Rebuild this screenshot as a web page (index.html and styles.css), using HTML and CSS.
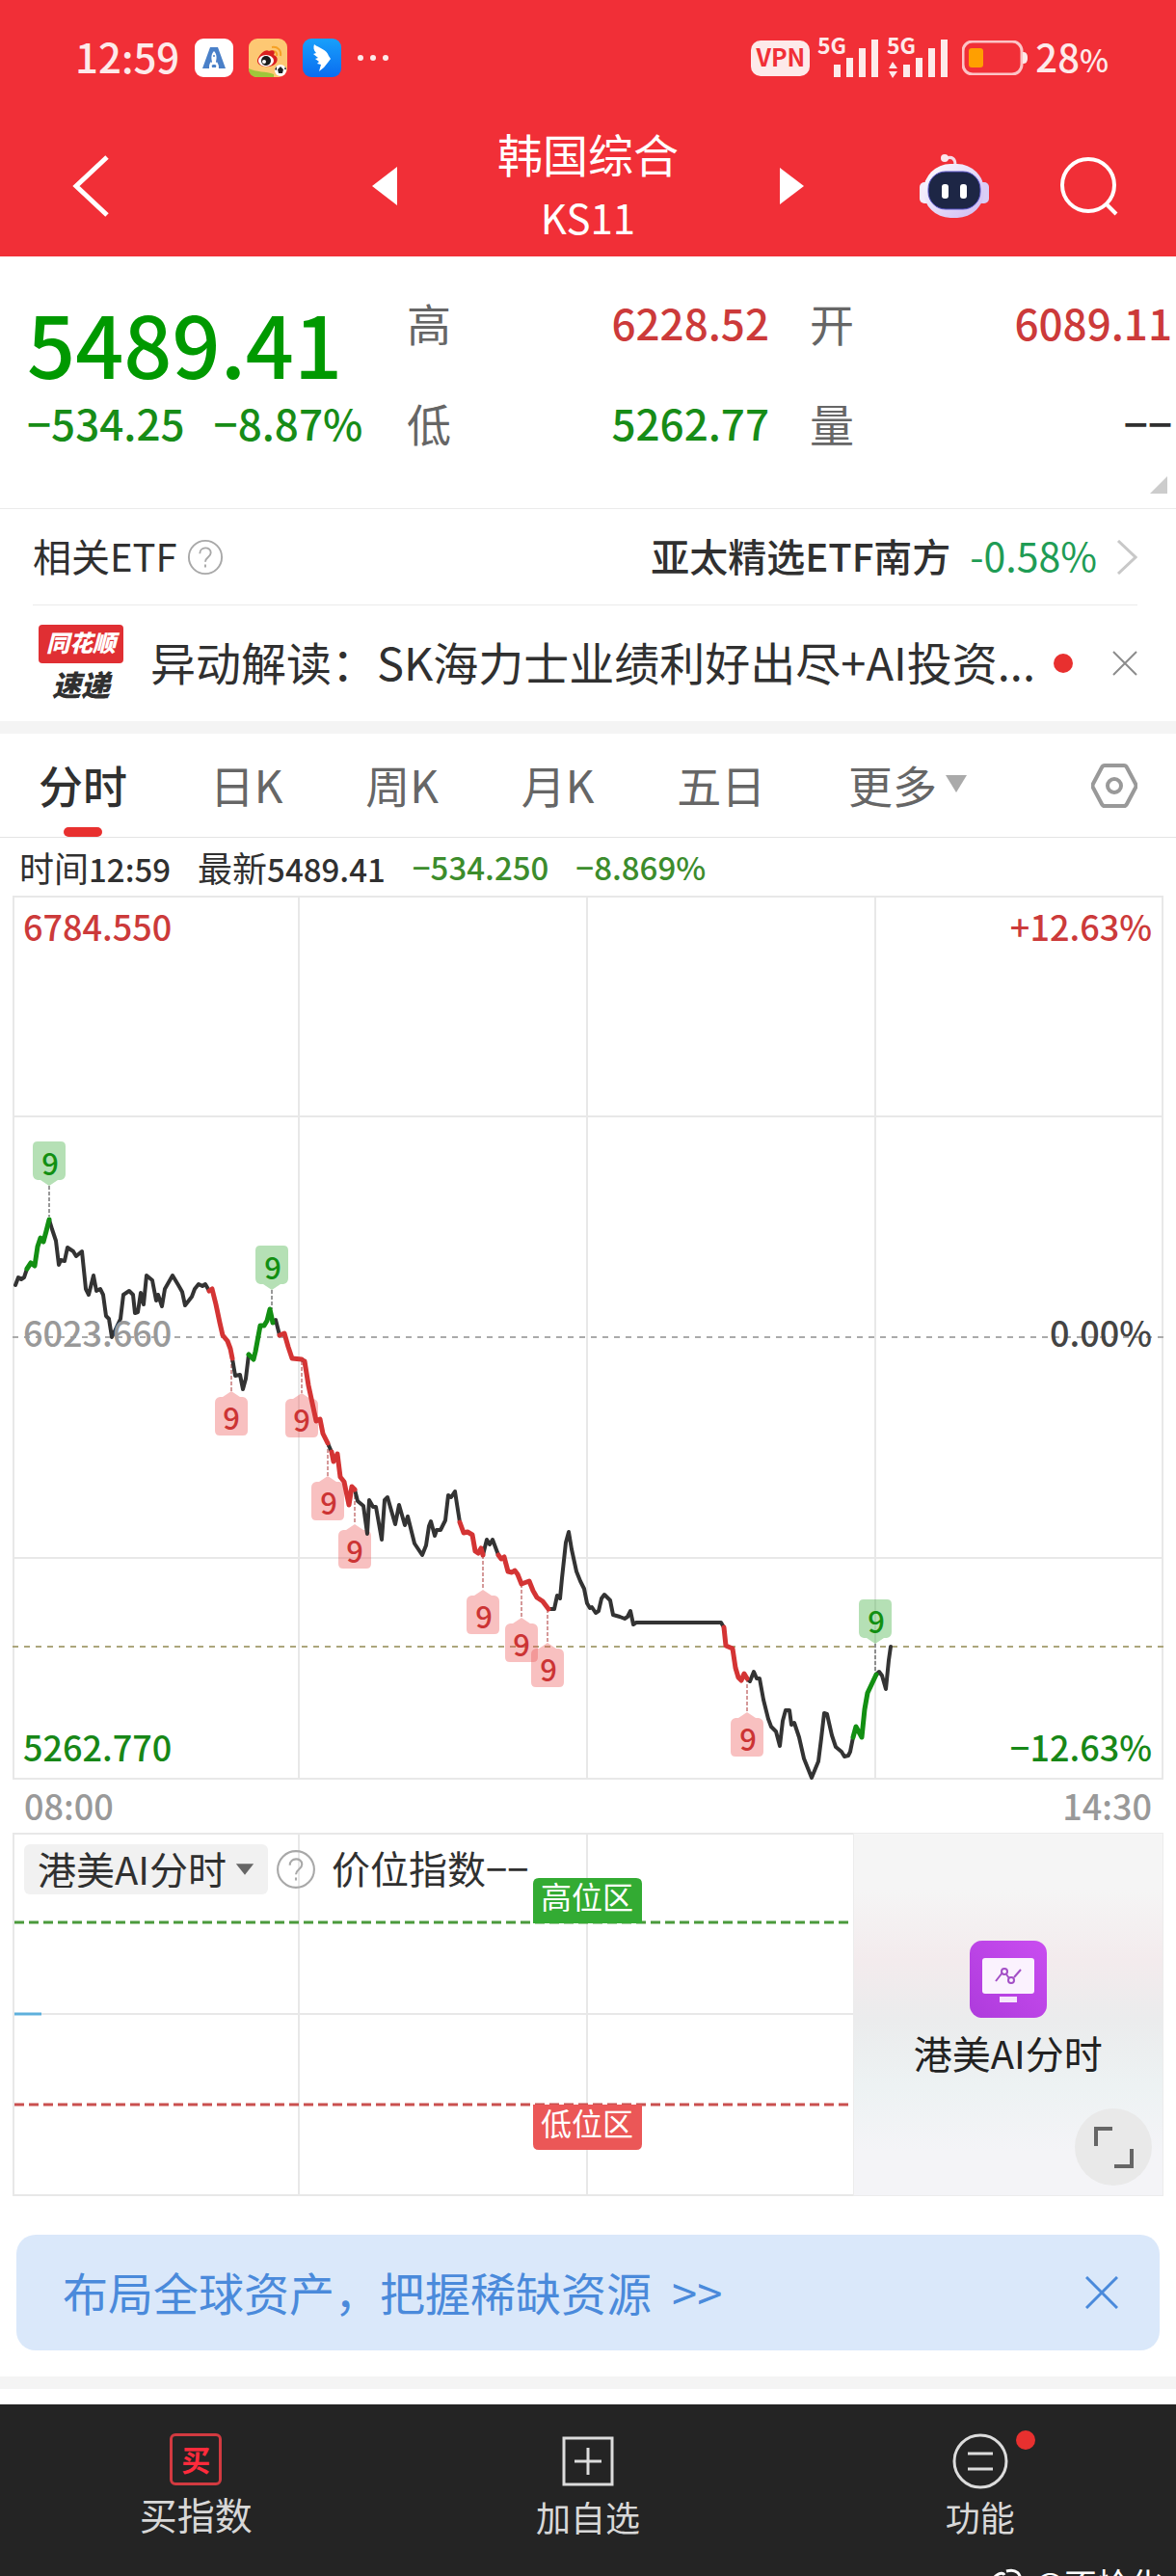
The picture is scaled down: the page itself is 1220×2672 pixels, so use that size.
FILE: index.html
```html
<!DOCTYPE html>
<html lang="zh-CN">
<head>
    <meta charset="UTF-8">
    <meta name="viewport" content="width=device-width, initial-scale=1.0">
    <title>韩国综合 KS11</title>
    <link rel="stylesheet" href="styles.css">
</head>
<body>
    <header class="header">
        <div class="status-bar">
            <span class="clock">12:59</span>
            <svg class="app-icon" viewBox="0 0 40 40">
                <rect width="40" height="40" rx="9" fill="#fff"/>
                <path d="M16 9h8l8 22h-7c0-4-1-5-2-7l-1 6h-4l-1-6c-2 2-2 4-2 7H8z" fill="#4a80c8"/>
                <path d="M20 13c-3 3-3 7-2 11l-3 5 4-2h2l4 2-3-5c1-4 1-8-2-11z" fill="#fff"/>
                <circle cx="20" cy="18" r="1" fill="#4a80c8"/>
            </svg>
            <svg class="app-icon" viewBox="0 0 40 40">
                <rect width="40" height="40" rx="9" fill="#fdc873"/>
                <path d="M0 31c8 4 18 3 26 6v3H9c-5 0-9-3-9-9z" fill="#9fc63a"/>
                <path d="M24 9c6-1 10 3 9 9M25 13c3 0 5 2 4 5" fill="none" stroke="#f5a024" stroke-width="2"/>
                <path d="M9 22c2-6 9-12 12-9 5-2 7 1 5 4 6 2 4 9-1 11-8 3-17 0-16-6z" fill="#d9201f"/>
                <ellipse cx="18" cy="23" rx="8" ry="6" fill="#fff"/>
                <circle cx="18" cy="23" r="5" fill="#1b1b1b"/>
                <circle cx="16" cy="24" r="2" fill="#fff"/>
                <circle cx="33" cy="33" r="6" fill="#fff"/>
                <path d="M33 29l3 3-1 4h-4l-1-4zM27 32l2-3v4zM39 32l-1-3-1 3z" fill="#222"/>
            </svg>
            <svg class="app-icon" viewBox="0 0 40 40">
                <defs>
                    <linearGradient id="wingBg" x1="0" y1="0" x2="0" y2="1">
                        <stop offset="0" stop-color="#18a0fb"/>
                        <stop offset="1" stop-color="#0a6cf0"/>
                    </linearGradient>
                </defs>
                <rect width="40" height="40" rx="9" fill="url(#wingBg)"/>
                <path d="M12 6c5 4 13 5 15 12l2 3-3 4-4 5-5 4 2-7-4-1 2-2-4-3 3-1-5-4 3-1c-3-3-3-6-2-9z" fill="#fff"/>
            </svg>
            <svg class="dots-icon" viewBox="0 0 34 8">
                <circle cx="4" cy="4" r="3"/><circle cx="17" cy="4" r="3"/><circle cx="30" cy="4" r="3"/>
            </svg>
            <div class="status-right">
                <span class="vpn">VPN</span>
                <svg class="signal" viewBox="0 0 64 44">
                    <text x="0" y="18">5G</text>
                    <path d="M17 29h7v13h-7zM30 22h7v20h-7zM43 12h7v30h-7zM56 3h7v39h-7z"/>
                </svg>
                <svg class="signal" viewBox="0 0 64 44">
                    <text x="0" y="18">5G</text>
                    <path d="M2 33l4-7 5 7zM2 36h9l-5 7z"/>
                    <path d="M17 29h7v13h-7zM30 22h7v20h-7zM43 12h7v30h-7zM56 3h7v39h-7z"/>
                </svg>
                <svg class="battery" viewBox="0 0 68 36">
                    <rect x="1" y="1" width="61" height="34" rx="10" fill="none" stroke="#fcc4c6" stroke-width="3"/>
                    <rect x="7" y="8" width="15" height="20" rx="3" fill="#ff9f00"/>
                    <path d="M63 12c3 0 5 1 5 6s-2 6-5 6z" fill="#fdeaea"/>
                </svg>
                <span class="battery-text">28<small>%</small></span>
            </div>
        </div>
        <nav class="title-bar">
            <button class="icon-btn back" aria-label="返回">
                <svg class="back-icon" viewBox="0 0 40 66"><path d="M36 3L4 33l32 30" fill="none" stroke="#fff" stroke-width="5"/></svg>
            </button>
            <div class="title-group">
                <button class="icon-btn" aria-label="上一个">
                    <svg class="arrow-icon" viewBox="0 0 26 40"><path d="M26 0v40L0 20z"/></svg>
                </button>
                <h1 class="title">韩国综合<span class="code">KS11</span></h1>
                <button class="icon-btn" aria-label="下一个">
                    <svg class="arrow-icon" viewBox="0 0 26 40"><path d="M1 1v38l25-19z"/></svg>
                </button>
            </div>
            <div class="title-actions">
                <button class="icon-btn" aria-label="智能助手">
                    <svg class="robot-icon" viewBox="0 0 72 68">
                        <defs>
                            <linearGradient id="robotHead" x1="0" y1="0" x2="1" y2="1">
                                <stop offset="0" stop-color="#fff"/>
                                <stop offset="1" stop-color="#cdb9f2"/>
                            </linearGradient>
                        </defs>
                        <path d="M28 5c6-2 9 1 9 7" fill="none" stroke="#f6dbe6" stroke-width="3"/>
                        <circle cx="26" cy="5" r="4" fill="#fbe6ec"/>
                        <rect x="0" y="30" width="12" height="22" rx="5" fill="#f3ecfb"/>
                        <rect x="60" y="30" width="12" height="22" rx="5" fill="#d9cdf6"/>
                        <rect x="4" y="11" width="63" height="56" rx="28" fill="url(#robotHead)"/>
                        <rect x="9" y="19" width="54" height="39" rx="18" fill="#1d2645" stroke="#5a55c8" stroke-width="1"/>
                        <rect x="23" y="32" width="7" height="15" rx="3" fill="#fff"/>
                        <rect x="42" y="32" width="7" height="15" rx="3" fill="#fff"/>
                    </svg>
                </button>
                <button class="icon-btn" aria-label="搜索">
                    <svg class="search-icon" viewBox="0 0 60 62">
                        <circle cx="29" cy="30" r="27" fill="none" stroke="#fff" stroke-width="4"/>
                        <path d="M47 49l11 11" stroke="#fff" stroke-width="4"/>
                    </svg>
                </button>
            </div>
        </nav>
    </header>

    <main>
        <section class="quote">
            <div class="quote-main">
                <div class="price">5489.41</div>
                <div class="change"><span>−534.25</span><span>−8.87%</span></div>
            </div>
            <dl class="stats">
                <div class="stat"><dt>高</dt><dd class="up">6228.52</dd></div>
                <div class="stat"><dt>开</dt><dd class="up">6089.11</dd></div>
                <div class="stat"><dt>低</dt><dd class="down">5262.77</dd></div>
                <div class="stat"><dt>量</dt><dd>−−</dd></div>
            </dl>
            <span class="corner"></span>
        </section>

        <section class="etf-row">
            <span>相关ETF</span>
            <svg class="help-icon" viewBox="0 0 40 40">
                <circle cx="20" cy="20" r="18"/>
                <path d="M14 16c0-8 12-8 12-1 0 5-6 5-6 10M20 28v3"/>
            </svg>
            <a class="etf-link" href="#">
                <span class="etf-name">亚太精选ETF南方</span>
                <span class="etf-change">-0.58%</span>
                <svg class="chevron-icon" viewBox="0 0 22 36"><path d="M2 1l18 17L2 35" fill="none" stroke="#c8c8c8" stroke-width="3"/></svg>
            </a>
        </section>

        <section class="news-row">
            <div class="news-badge">
                <span class="badge-top">同花顺</span>
                <span class="badge-bottom">速递</span>
            </div>
            <a class="news-title" href="#">异动解读：SK海力士业绩利好出尽+AI投资...</a>
            <span class="dot"></span>
            <button class="icon-btn news-close" aria-label="关闭">
                <svg class="close-small" viewBox="0 0 26 26"><path d="M1 1l24 24M25 1L1 25" fill="none" stroke="#8c8c8c" stroke-width="2"/></svg>
            </button>
        </section>

        <div class="divider"></div>

        <nav class="tabs">
            <div class="tab-list">
                <button class="tab active">分时</button>
                <button class="tab">日K</button>
                <button class="tab">周K</button>
                <button class="tab">月K</button>
                <button class="tab">五日</button>
                <button class="tab">更多<svg class="caret" viewBox="0 0 24 20"><path d="M1 1h22L12 19z"/></svg></button>
            </div>
            <button class="icon-btn" aria-label="设置">
                <svg class="setting-icon" viewBox="0 0 48 46">
                    <path d="M14 2h20q2 0 3 2l9 17q1 2 0 4l-9 17q-1 2-3 2H14q-2 0-3-2L2 25q-1-2 0-4l9-17q1-2 3-2z"/>
                    <circle cx="24" cy="23" r="7"/>
                </svg>
            </button>
        </nav>

        <div class="chart-info">
            <span>时间<b>12:59</b></span>
            <span>最新<b>5489.41</b></span>
            <b class="info-down">−534.250</b>
            <b class="info-down">−8.869%</b>
        </div>

        <!-- 分时走势 -->
        <svg class="chart" viewBox="0 0 1194 917">
            <defs>
                <path id="tagDown" d="M-12-46h24q5 0 5 5v29q0 5-5 6h-3L0 0l-9-6h-3q-5-1-5-6v-29q0-5 5-5z"/>
                <path id="tagUp" d="M-12 46h24q5 0 5-5V12q0-5-5-6H9L0 0l-9 6h-3q-5 1-5 6v29q0 5 5 5z"/>
            </defs>
            <path class="grid" d="M1 1h1192v915H1zM297 1v915M596 1v915M895 1v915M1 229h1192M1 687h1192"/>
            <path class="base-line" d="M0 458h1194"/>
            <path class="now-line" d="M0 779h1194"/>

            <g class="stems">
                <path d="M38 301v32M269 409v20M895 776v32" stroke="#333"/>
                <path d="M227 480v34M300 483v33M327 568v34M355 616v36M488 684v36M528 714v35M555 740v35M762 812v35" stroke="#a33"/>
            </g>
            <g class="tag-green">
                <use href="#tagDown" x="38" y="301"/>
                <use href="#tagDown" x="269" y="409"/>
                <use href="#tagDown" x="895" y="776"/>
            </g>
            <g class="tag-red">
                <use href="#tagUp" x="227" y="514"/>
                <use href="#tagUp" x="300" y="516"/>
                <use href="#tagUp" x="327" y="602"/>
                <use href="#tagUp" x="355" y="652"/>
                <use href="#tagUp" x="488" y="720"/>
                <use href="#tagUp" x="528" y="749"/>
                <use href="#tagUp" x="555" y="775"/>
                <use href="#tagUp" x="762" y="847"/>
            </g>

            <g class="line">
                <path d="M3 404L6 396 9 398 12 396 15 387M38 336L41 346 45 358 48 383 50 378 54 379 57 365 63 369 66 374 72 369 75 398 76 408 79 414 84 394 87 410 91 408 94 414 97 436 100 439 103 458 112 439 115 414 121 410 125 414 127 433 130 432 133 412 136 424 139 394 145 399 149 420 151 414 155 426 158 408 166 394 172 404 176 411 179 425 186 416 189 408 193 403 197 405 200 403 204 410"/>
                <path d="M228 480L231 498 236 497 239 512 242 501 245 476M270 443L273 440 277 456M300 481L303 483M327 568L331 577M355 616L358 628 364 633 368 662 370 627 374 634 377 634 383 668 386 627 389 624 397 652 401 632 407 653 410 644 417 672 425 684 429 674 432 654 434 649 438 664 440 658 444 658 449 648 452 622 455 624 459 618 461 631 464 650"/>
                <path d="M488 684L492 668 495 673 498 668 504 684M556 740L562 740 565 726 568 729 570 708 574 671 577 660 580 678 585 701 589 711 593 719 596 734 599 739 601 738 605 744 608 742 611 729 614 725 620 731 623 746 630 748 635 750 638 748 641 742 644 756 647 754 735 754 738 759"/>
                <path d="M762 812L765 815 769 805 772 812 775 812 779 834 784 854 787 862 792 867 796 882 799 856 802 845 806 845 808 860 811 858 816 873 821 895 829 915 836 898 839 874 842 848 845 849 850 871 854 883 860 888 863 893 867 892 869 888 872 873M896 808L899 805 902 809 906 823 909 793 911 779"/>
                <path class="seg-green" d="M15 387L19 381 23 384 26 364 29 355 32 359 35 348 38 336M245 476L250 481 252 473 257 446 261 446 264 441 267 429 270 443M872 873L875 862 881 873 884 844 887 827 896 808"/>
                <path class="seg-red" d="M204 410L207 408 211 424 215 443 218 456 223 462 226 470 228 480M277 456L282 454 286 468 290 480 300 481M303 483L307 508 315 545 319 543 322 558 327 568M331 577L333 587 337 579 340 603 344 608 349 632 352 613 355 616"/>
                <path class="seg-red" d="M464 650L468 661 472 660 477 663 480 680 483 682 486 677 488 684M504 684L507 688 510 686 514 701 518 702 521 700 524 704 528 714 536 711 540 721 544 728 550 732 556 740M738 759L740 778 747 781 750 801 753 811 756 814 759 807 762 812"/>
            </g>

            <g class="nine nine-green">
                <text x="39" y="290">9</text>
                <text x="270" y="398">9</text>
                <text x="896" y="765">9</text>
            </g>
            <g class="nine nine-red">
                <text x="227" y="554">9</text>
                <text x="300" y="556">9</text>
                <text x="328" y="642">9</text>
                <text x="355" y="692">9</text>
                <text x="489" y="760">9</text>
                <text x="528" y="789">9</text>
                <text x="556" y="815">9</text>
                <text x="763" y="887">9</text>
            </g>

            <g class="axis">
                <text x="11" y="47" fill="#cc3a3a">6784.550</text>
                <text x="11" y="468" fill="#999">6023.660</text>
                <text x="11" y="898" fill="#178717">5262.770</text>
                <text class="end" x="1182" y="47" fill="#cc3a3a">+12.63%</text>
                <text class="end" x="1182" y="468" fill="#444">0.00%</text>
                <text class="end" x="1182" y="898" fill="#178717">−12.63%</text>
            </g>
        </svg>
        <div class="time-axis"><span>08:00</span><span>14:30</span></div>

        <!-- 副图指标 -->
        <section class="indicator">
            <svg class="indicator-chart" viewBox="0 0 1194 377">
                <path class="grid" d="M1 1h1192v375H1zM297 1v375M596 1v375M1 188h1192"/>
                <path d="M2 93h871" stroke="#4b9a3c" stroke-width="3" stroke-dasharray="10 5"/>
                <path d="M2 282h871" stroke="#c9504f" stroke-width="3" stroke-dasharray="10 5"/>
                <path d="M2 188h28" stroke="#5fb0dc" stroke-width="3"/>
                <path d="M540 94V53q0-6 6-6h101q6 0 6 6v41z" fill="#33ab33"/>
                <path d="M540 282v41q0 6 6 6h101q6 0 6-6v-41z" fill="#eb5757"/>
                <text class="zone" x="596" y="79">高位区</text>
                <text class="zone" x="596" y="314">低位区</text>
            </svg>
            <div class="indicator-head">
                <label class="picker">
                    <select aria-label="指标"><option>港美AI分时</option></select>
                    <svg class="caret-small" viewBox="0 0 24 16"><path d="M1 1h22L12 15z"/></svg>
                </label>
                <svg class="help-icon large" viewBox="0 0 40 40">
                    <circle cx="20" cy="20" r="18"/>
                    <path d="M14 16c0-8 12-8 12-1 0 5-6 5-6 10M20 28v3"/>
                </svg>
                <span>价位指数−−</span>
            </div>
            <a class="ai-panel" href="#">
                <svg class="ai-icon" viewBox="0 0 80 80">
                    <defs>
                        <linearGradient id="aiBg" x1="1" y1="0" x2="0" y2="1">
                            <stop offset="0" stop-color="#c94df0"/>
                            <stop offset="1" stop-color="#ae3bdc"/>
                        </linearGradient>
                    </defs>
                    <rect width="80" height="80" rx="13" fill="url(#aiBg)"/>
                    <rect x="13" y="18" width="54" height="37" rx="3" fill="#fbf2fe"/>
                    <rect x="31" y="58" width="18" height="6" fill="#f7e6fc"/>
                    <g fill="none" stroke="#a34fc6" stroke-width="2">
                        <path d="M27 42l7-9M38 35l3 4M46 38l7-8"/>
                        <circle cx="36" cy="32" r="3"/>
                        <circle cx="43" cy="41" r="3"/>
                    </g>
                </svg>
                <span>港美AI分时</span>
            </a>
            <button class="expand-btn" aria-label="全屏">
                <svg viewBox="0 0 80 80"><path d="M22 39V21h17M41 60h18V42" fill="none" stroke="#666" stroke-width="4"/></svg>
            </button>
        </section>

        <section class="banner">
            <a href="#">布局全球资产，把握稀缺资源&nbsp;&nbsp;&gt;&gt;</a>
            <button class="icon-btn" aria-label="关闭广告">
                <svg class="close-banner" viewBox="0 0 34 34"><path d="M1 1l32 32M33 1L1 33" fill="none" stroke="#4a8adb" stroke-width="3"/></svg>
            </button>
        </section>

        <div class="divider"></div>
    </main>

    <footer class="footer">
        <button class="foot-item buy">
            <span class="buy-icon">买</span>
            <span>买指数</span>
        </button>
        <button class="foot-item">
            <svg class="foot-icon" viewBox="0 0 58 58">
                <path d="M4 5h50v48H4zM15 29h28M29 15v28"/>
            </svg>
            <span>加自选</span>
        </button>
        <button class="foot-item">
            <span class="foot-badge">
                <svg class="foot-icon" viewBox="0 0 58 58">
                    <circle cx="29" cy="29" r="27"/>
                    <path d="M16 21h26M16 37h26"/>
                </svg>
                <i class="dot"></i>
            </span>
            <span>功能</span>
        </button>
        <div class="watermark">
            <svg viewBox="0 0 40 34"><path d="M4 16c4-9 12-12 14-8M20 4c10-3 16 3 14 11M20 11c5-1 8 2 7 6" fill="none" stroke="#fff" stroke-width="3"/></svg>
            <span>@不恰化</span>
        </div>
    </footer>
</body>
</html>
```
FILE: styles.css
```css
* {
    box-sizing: border-box;
}

body {
    margin: 0;
    min-height: 100vh;
    display: flex;
    flex-direction: column;
    background-color: #fff;
    color: #303030;
    font-family: "Noto Sans CJK SC", sans-serif;
    font-size: 40px;
    line-height: 1;
}

button,
select {
    border: none;
    padding: 0;
    background: none;
    color: inherit;
    font: inherit;
    cursor: pointer;
}

a {
    color: inherit;
    text-decoration: none;
}

svg {
    display: block;
}

b {
    font-weight: 500;
}

.icon-btn {
    display: flex;
    flex: none;
}

/* header */
.header {
    background-color: #f12f37;
    color: #fff;
}

.status-bar {
    display: flex;
    align-items: center;
    gap: 16px;
    height: 120px;
    padding: 0 70px 0 78px;
    color: #fdeaea;
}

.clock {
    padding-bottom: 4px;
    font-size: 42px;
    font-weight: 500;
}

.app-icon {
    width: 40px;
    height: 40px;
}

.dots-icon {
    width: 34px;
    fill: #fdeaea;
}

.status-right {
    display: flex;
    align-items: center;
    gap: 8px;
    margin-left: auto;
}

.vpn {
    padding: 4px 5px 8px;
    border-radius: 10px;
    background-color: #fdeaea;
    color: #f12f37;
    font-size: 25px;
    font-weight: 700;
}

.signal {
    width: 64px;
    height: 44px;
    overflow: visible;
    fill: #fdeaea;
    font-size: 23px;
    font-weight: 700;
}

.battery {
    width: 68px;
    height: 36px;
    margin-left: 6px;
}

.battery-text {
    padding-bottom: 4px;
    font-size: 40px;
    font-weight: 500;
}

.battery-text small {
    font-size: 32px;
}

.title-bar {
    display: grid;
    grid-template-columns: 1fr 448px 1fr;
    align-items: center;
    height: 146px;
    padding: 0 60px;
}

.back {
    padding-left: 15px;
}

.back-icon {
    width: 40px;
    height: 66px;
}

.title-group {
    display: flex;
    align-items: center;
    justify-content: space-between;
}

.arrow-icon {
    width: 26px;
    height: 40px;
    fill: #fff;
}

.title {
    margin: 0;
    padding-bottom: 2px;
    font-size: 47px;
    font-weight: 400;
    line-height: 66px;
    text-align: center;
}

.code {
    display: block;
    font-size: 42px;
}

.title-actions {
    display: flex;
    align-items: center;
    justify-content: flex-end;
    gap: 74px;
}

.robot-icon {
    width: 72px;
    height: 68px;
}

.search-icon {
    width: 60px;
    height: 62px;
}

/* quote */
.quote {
    position: relative;
    display: flex;
    padding: 16px 4px 37px 28px;
    border-bottom: 1px solid #ebebeb;
}

.quote-main {
    width: 394px;
    padding-top: 23px;
    color: #009900;
}

.price {
    font-size: 88px;
    font-weight: 500;
    line-height: 100px;
}

.change {
    display: flex;
    gap: 30px;
    font-size: 44px;
    font-weight: 500;
    line-height: 66px;
    color: #178c17;
}

.stats {
    display: grid;
    flex: 1;
    grid-template-columns: 1fr 1fr;
    column-gap: 42px;
    margin: 0;
    font-size: 46px;
}

.stat {
    display: flex;
    align-items: center;
    justify-content: space-between;
    height: 104px;
}

.stat dt {
    color: #666;
}

.stat dd {
    margin: 0;
    font-size: 44px;
    font-weight: 500;
}

.up {
    color: #cc3a3a;
}

.down {
    color: #178c17;
}

.corner {
    position: absolute;
    right: 9px;
    bottom: 15px;
    border-left: 18px solid transparent;
    border-bottom: 18px solid #ccc;
}

/* etf + news */
.etf-row {
    display: flex;
    align-items: center;
    gap: 10px;
    height: 100px;
    margin: 0 40px 0 34px;
    border-bottom: 1px solid #ebebeb;
}

.etf-row span {
    padding-bottom: 4px;
}

.help-icon {
    width: 38px;
    height: 38px;
    fill: none;
    stroke: #a8a8a8;
    stroke-width: 2;
}

.help-icon.large {
    width: 42px;
    height: 42px;
}

.etf-link {
    display: flex;
    align-items: center;
    gap: 20px;
    margin-left: auto;
}

.etf-name {
    font-weight: 500;
}

.etf-change {
    font-size: 41px;
    color: #1f9c55;
}

.chevron-icon {
    width: 22px;
    height: 36px;
}

.news-row {
    display: flex;
    align-items: center;
    height: 120px;
    padding: 0 40px;
}

.news-badge {
    display: flex;
    flex: none;
    flex-direction: column;
    align-items: center;
    gap: 6px;
    width: 88px;
    padding-bottom: 4px;
    font-style: italic;
    font-weight: 900;
    white-space: nowrap;
}

.badge-top {
    padding: 6px 8px 10px;
    border-radius: 4px;
    background-color: #e02f33;
    color: #fff;
    font-size: 24px;
}

.badge-bottom {
    font-size: 30px;
}

.news-title {
    flex: 1;
    margin-left: 28px;
    padding-bottom: 4px;
    font-size: 47px;
    line-height: 60px;
    white-space: nowrap;
}

.dot {
    width: 20px;
    height: 20px;
    border-radius: 50%;
    background-color: #e8302f;
}

.news-close {
    margin-left: 41px;
}

.close-small {
    width: 26px;
    height: 26px;
}

.divider {
    height: 13px;
    background-color: #f4f4f4;
}

/* tabs */
.tabs {
    display: flex;
    align-items: center;
    justify-content: space-between;
    height: 108px;
    padding: 0 40px;
    border-bottom: 1px solid #e4e4e4;
    color: #666;
    font-size: 46px;
}

.tab-list {
    display: flex;
    justify-content: space-between;
    width: 85%;
    max-width: 964px;
}

.tab {
    position: relative;
    display: flex;
    align-items: center;
    gap: 8px;
    height: 107px;
    padding-bottom: 4px;
}

.tab.active {
    color: #303030;
    font-weight: 500;
}

.tab.active::after {
    content: "";
    position: absolute;
    left: 50%;
    bottom: 0;
    width: 40px;
    height: 10px;
    margin-left: -20px;
    border-radius: 5px;
    background-color: #e8302f;
}

.caret {
    width: 24px;
    height: 20px;
    fill: #aaa;
}

.setting-icon {
    width: 48px;
    height: 46px;
    fill: none;
    stroke: #999;
    stroke-width: 4;
}

/* chart */
.chart-info {
    display: flex;
    align-items: center;
    gap: 28px;
    height: 60px;
    padding: 0 20px;
    font-size: 36px;
}

.chart-info b {
    font-size: 33px;
}

.chart-info .info-down {
    color: #3c8c2c;
}

.chart,
.time-axis,
.indicator {
    margin: 0 13px;
}

.grid {
    fill: none;
    stroke: #e8e8e8;
    stroke-width: 2;
}

.base-line {
    stroke: #aaa;
    stroke-width: 2;
    stroke-dasharray: 6 6;
}

.now-line {
    stroke: #aca67c;
    stroke-width: 2;
    stroke-dasharray: 6 6;
}

.stems {
    stroke-width: 1;
    stroke-dasharray: 4 2;
}

.tag-green {
    fill: rgba(50, 170, 50, 0.36);
}

.tag-red {
    fill: rgba(235, 80, 80, 0.36);
}

.line {
    fill: none;
    stroke: #333;
    stroke-width: 4;
    stroke-linejoin: round;
    stroke-linecap: round;
}

.seg-green {
    stroke: #128f12;
    stroke-width: 5;
}

.seg-red {
    stroke: #d43434;
    stroke-width: 5;
}

.nine {
    font-size: 31px;
    font-weight: 500;
    text-anchor: middle;
}

.nine-green {
    fill: #128f12;
}

.nine-red {
    fill: #cc3434;
}

.axis {
    font-size: 36px;
    font-weight: 500;
}

.end {
    text-anchor: end;
}

.time-axis {
    display: flex;
    align-items: center;
    justify-content: space-between;
    height: 55px;
    padding: 0 12px 4px;
    color: #999;
    font-size: 36px;
    font-weight: 500;
}

.indicator {
    position: relative;
}

.zone {
    fill: #fff;
    font-size: 32px;
    text-anchor: middle;
}

.indicator-head {
    position: absolute;
    top: 12px;
    left: 12px;
    display: flex;
    align-items: center;
    gap: 8px;
}

.indicator-head > span {
    margin-left: 8px;
    padding-bottom: 4px;
}

.picker {
    display: flex;
    align-items: center;
    gap: 8px;
    height: 52px;
    padding: 0 14px;
    border-radius: 6px;
    background-color: #f1f1f1;
}

.picker select {
    appearance: none;
    padding-bottom: 2px;
}

.caret-small {
    width: 20px;
    height: 14px;
    fill: #666;
}

.ai-panel {
    position: absolute;
    top: 0;
    right: 0;
    bottom: 0;
    width: 27%;
    display: flex;
    flex-direction: column;
    align-items: center;
    justify-content: center;
    gap: 16px;
    padding-bottom: 18px;
    border: 1px solid #ececec;
    background: linear-gradient(#f5f5f5 15%, #f3ebed 35%, #ebeced 52%, #edf2f3 70%, #f4f4f7 88%);
    color: #222;
}

.ai-icon {
    width: 80px;
    height: 80px;
}

.expand-btn {
    position: absolute;
    right: 12px;
    bottom: 11px;
    width: 80px;
    height: 80px;
    border-radius: 50%;
    background-color: #e9e9e9;
}

/* banner */
.banner {
    display: flex;
    align-items: center;
    justify-content: space-between;
    height: 120px;
    margin: 40px 17px 27px;
    padding: 0 43px 0 48px;
    border-radius: 20px;
    background-color: #dae8fa;
    color: #4a8adb;
    font-size: 47px;
}

.banner a {
    padding-bottom: 4px;
}

.close-banner {
    width: 34px;
    height: 34px;
}

/* footer */
.footer {
    position: relative;
    display: grid;
    grid-template-columns: repeat(3, 1fr);
    height: 178px;
    margin-top: auto;
    overflow: hidden;
    background-color: #242424;
    color: #d8d8d8;
    font-size: 36px;
}

.foot-item {
    display: flex;
    flex-direction: column;
    align-items: center;
    gap: 10px;
    padding-top: 30px;
}

.foot-item.buy {
    font-size: 39px;
}

.buy-icon {
    width: 54px;
    height: 54px;
    border: 3px solid #d23a40;
    border-radius: 6px;
    color: #ff2b3c;
    font-size: 30px;
    font-weight: 700;
    line-height: 46px;
    text-align: center;
}

.foot-icon {
    width: 58px;
    height: 58px;
    fill: none;
    stroke: #dcdcdc;
    stroke-width: 3;
}

.foot-badge {
    position: relative;
}

.foot-badge .dot {
    position: absolute;
    top: -3px;
    right: -28px;
}

.watermark {
    position: absolute;
    top: 169px;
    right: 14px;
    display: flex;
    gap: 8px;
    color: #fff;
    font-size: 34px;
}

.watermark svg {
    width: 40px;
    height: 34px;
}
```
